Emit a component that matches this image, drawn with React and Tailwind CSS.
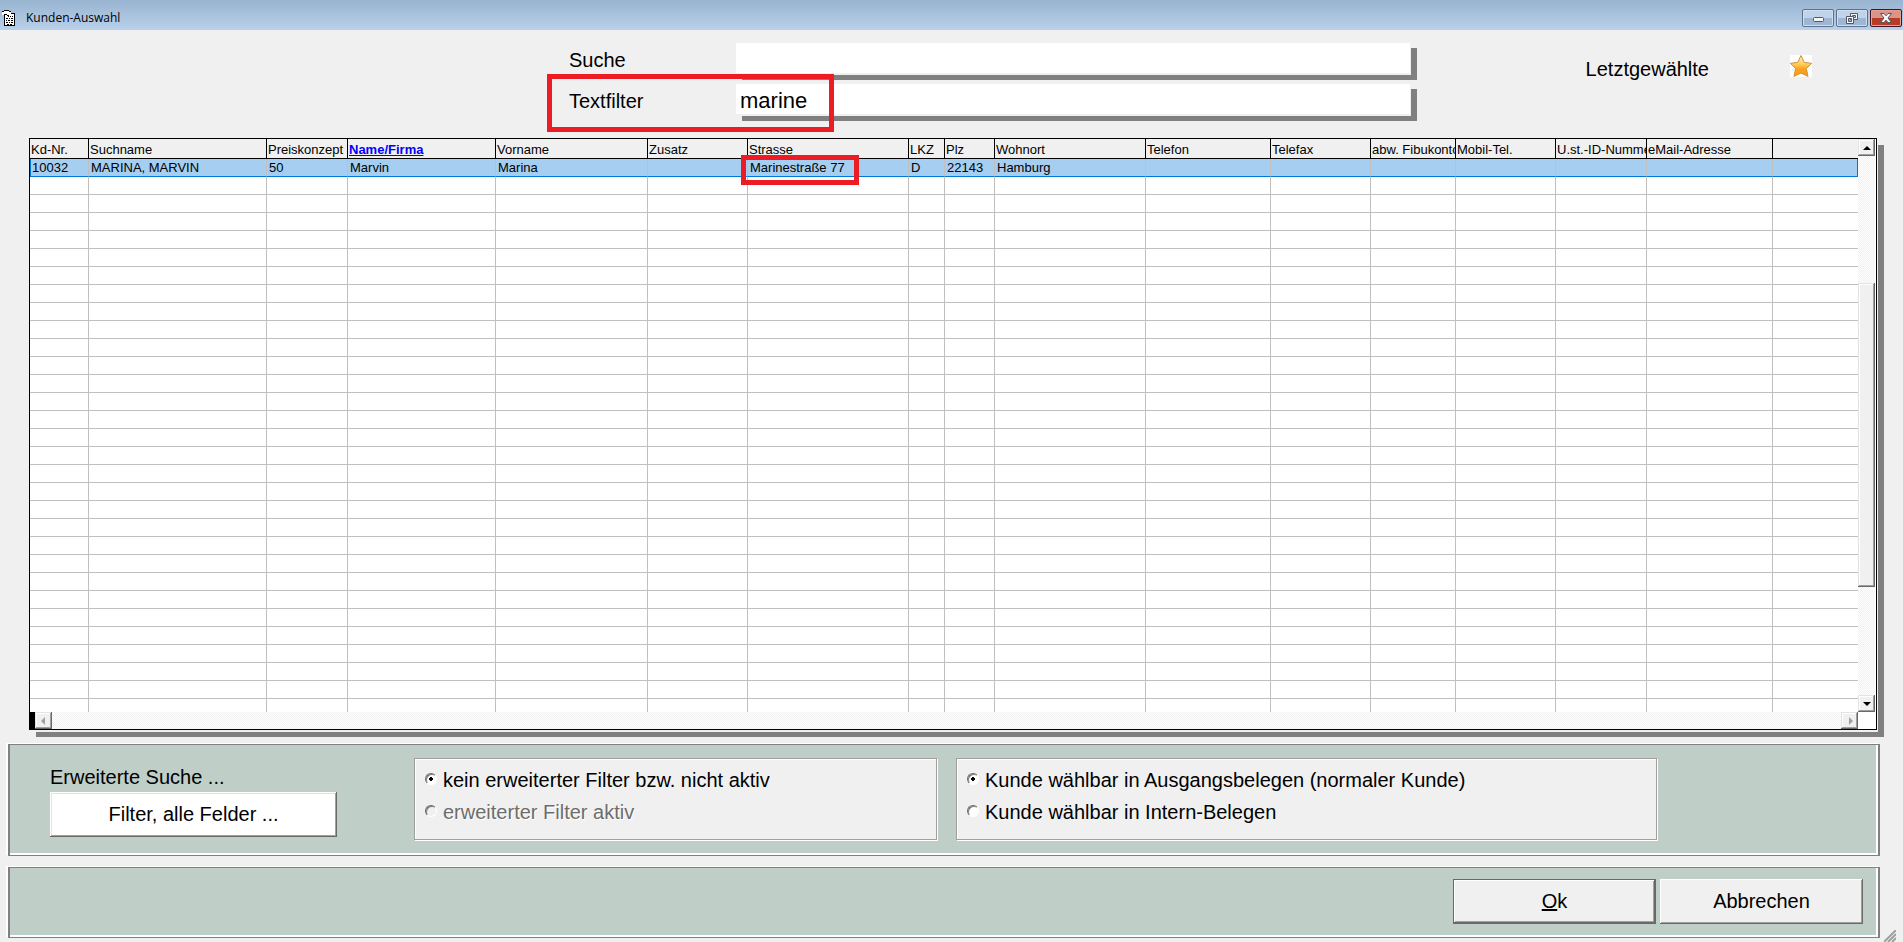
import { useState } from "react"

const COLUMNS = [
  { key: "nr", title: "Kd-Nr.", width: "w-[59px]" },
  { key: "suchname", title: "Suchname", width: "w-[178px]" },
  { key: "preis", title: "Preiskonzept", width: "w-[81px]" },
  { key: "name", title: "Name/Firma", width: "w-[148px]", sorted: true },
  { key: "vorname", title: "Vorname", width: "w-[152px]" },
  { key: "zusatz", title: "Zusatz", width: "w-[100px]" },
  { key: "strasse", title: "Strasse", width: "w-[161px]", marked: true },
  { key: "lkz", title: "LKZ", width: "w-[36px]" },
  { key: "plz", title: "Plz", width: "w-[50px]" },
  { key: "ort", title: "Wohnort", width: "w-[151px]" },
  { key: "telefon", title: "Telefon", width: "w-[125px]" },
  { key: "telefax", title: "Telefax", width: "w-[100px]" },
  { key: "fibu", title: "abw. Fibukonto", width: "w-[85px]" },
  { key: "mobil", title: "Mobil-Tel.", width: "w-[100px]" },
  { key: "ust", title: "U.st.-ID-Nummer", width: "w-[91px]" },
  { key: "email", title: "eMail-Adresse", width: "w-[126px]" },
  { key: "rest", title: "", width: "" },
]

const CUSTOMER = {
  nr: "10032",
  suchname: "MARINA, MARVIN",
  preis: "50",
  name: "Marvin",
  vorname: "Marina",
  strasse: "Marinestraße 77",
  lkz: "D",
  plz: "22143",
  ort: "Hamburg",
}

const EMPTY_ROWS = Array.from({ length: 29 }, (_, i) => i)

const TRACK =
  "bg-[repeating-conic-gradient(#ffffff_0_25%,#f0f0f0_0_50%)] bg-[length:2px_2px]"

const RAISED =
  "bg-[#f0f0f0] shadow-[inset_-1px_-1px_0_#696969,inset_1px_1px_0_#e3e3e3,inset_-2px_-2px_0_#a0a0a0,inset_2px_2px_0_#ffffff]"

const PANEL =
  "border-x-2 border-y border-[#808080] bg-[#bfcfc8] shadow-[inset_-2px_-2px_0_#ffffff,-2px_-1px_0_#ffffff]"

const TitleBar = () => (
  <header className="flex h-[30px] items-center bg-linear-to-b from-[#99b4d1] to-[#b9d1ea] pl-[2px] pt-[6px]">
    <svg width="14" height="17" viewBox="0 0 14 17" shapeRendering="crispEdges">
      <path d="M2.500 3.500h10v12h-10z" fill="#fff" stroke="#000" />
      <path
        d="M6 6.500h1m1 0h1m1 0h1M4 8.500h2m1 0h1m1 0h2M4 10.500h1m1 0h2m1 0h2M4 12.500h2m1 0h1m1 0h2M5 14h2m1 0h2"
        stroke="#000"
      />
      <path d="M0 2h2V1h5v1h2v2H7v2H5V5H0z" fill="#fff" />
      <path d="M0 1.500h2M2 .500h5M7 1.500h2M2 4.500h3M5 5.500h2" stroke="#000" />
    </svg>
    <h1 className="ml-[10px] flex-1 font-['Open_Sans',sans-serif] text-[12px]">
      Kunden-Auswahl
    </h1>
    <div className="flex gap-[2px] pr-px">
      <button
        aria-label="Minimieren"
        className="flex h-[18px] w-8 items-center justify-center rounded-[2px] border border-[#5d718c] bg-linear-to-b from-[#c0d3e9] from-50% to-[#9db6d3] to-50% shadow-[inset_0_0_0_1px_#cfdff0]"
      >
        <svg width="11" height="5" viewBox="0 0 11 5" className="mt-[3px]">
          <rect x=".5" y=".5" width="10" height="4" rx="1" fill="#f5f5f5" stroke="#535666" />
        </svg>
      </button>
      <button
        aria-label="Wiederherstellen"
        className="flex h-[18px] w-8 items-center justify-center rounded-[2px] border border-[#5d718c] bg-linear-to-b from-[#c0d3e9] from-50% to-[#9db6d3] to-50% shadow-[inset_0_0_0_1px_#cfdff0]"
      >
        <svg width="12" height="11" viewBox="0 0 12 11">
          <path
            d="M4.500.500h7v6h-7zM6.500 2.500h3v2h-3z"
            fill="#f5f5f5"
            fillRule="evenodd"
            stroke="#535666"
          />
          <path
            d="M.500 3.500h7v7h-7zM2.500 5.500h3v3h-3z"
            fill="#f5f5f5"
            fillRule="evenodd"
            stroke="#535666"
          />
        </svg>
      </button>
      <button
        aria-label="Schließen"
        className="flex h-[18px] w-8 items-center justify-center rounded-[2px] border border-[#43141d] bg-linear-to-b from-[#dd9488] from-50% to-[#b83c25] to-50% shadow-[inset_0_0_0_1px_#e9a092]"
      >
        <svg width="12" height="10" viewBox="0 0 12 10">
          <path
            d="M.500.500h3.500L6 2.800 8 .500h3.500L8 5l3.500 4.500H8L6 7.200 4 9.500H.500L4 5z"
            fill="#f8f8f8"
            stroke="#535666"
          />
        </svg>
      </button>
    </div>
  </header>
)

const SearchField = ({ id, label, value, onChange }) => (
  <div className="flex items-start">
    <label htmlFor={id} className="w-[167px] pt-[3px] text-[20px] leading-[28px]">
      {label}
    </label>
    <input
      id={id}
      type="text"
      value={value}
      onChange={(e) => onChange(e.target.value)}
      className="h-8 min-w-0 flex-1 border-r border-b-2 border-[#f0f0f0] bg-white pl-1 pt-[2px] text-[22px] shadow-[6px_5px_0_#808080] outline-none"
    />
  </div>
)

const Star = () => (
  <svg width="22" height="22" viewBox="0 0 22 22">
    <defs>
      <linearGradient id="gold" x1="0" y1="0" x2="0" y2="1">
        <stop offset="0" stopColor="#fff3b0" />
        <stop offset=".4" stopColor="#fdd060" />
        <stop offset=".65" stopColor="#fca21c" />
        <stop offset="1" stopColor="#fb9a1e" />
      </linearGradient>
    </defs>
    <path
      d="M11 .500l3.300 6.900 7.300.900-5.200 5.300 1.600 7.800-7-3.300-7 3.300 1.600-7.800L.400 8.300l7.300-.900z"
      fill="url(#gold)"
      stroke="#d0913c"
      strokeLinejoin="round"
    />
  </svg>
)

const ScrollButton = ({ label, points, disabled }) => (
  <button
    aria-label={label}
    disabled={disabled}
    className={`flex h-[17px] w-[17px] shrink-0 items-center justify-center ${RAISED}`}
  >
    <svg width="8" height="8" viewBox="0 0 8 8">
      <polygon points={points} fill={disabled ? "#a0a0a0" : "#000"} />
    </svg>
  </button>
)

const CustomerTable = () => (
  <div className="ml-[29px] mr-[26px] border border-black bg-white shadow-[1px_2px_0_#f0f0f0,7px_7px_0_#808080]">
    <div className="flex">
      <div className="h-[573px] min-w-0 flex-1">
        <table className="w-full table-fixed border-separate border-spacing-0 text-[13px] leading-[17px]">
          <thead>
            <tr className="h-5">
              {COLUMNS.map((col) => (
                <th
                  key={col.key}
                  className={`${col.width} h-5 border-b border-black bg-[#f0f0f0] p-0 pl-px pt-[2px] text-left font-normal not-last:border-r`}
                >
                  <div className="h-[17px] overflow-hidden whitespace-nowrap">
                    {col.sorted ? (
                      <a href="#sort" className="font-bold text-[#0000ff] underline">
                        {col.title}
                      </a>
                    ) : (
                      col.title
                    )}
                  </div>
                </th>
              ))}
            </tr>
          </thead>
          <tbody>
            <tr className="h-[18px]">
              {COLUMNS.map((col) => (
                <td
                  key={col.key}
                  className="relative h-[18px] whitespace-nowrap border-b border-r border-r-[#c0c0c0] border-b-[#0078d7] bg-[#a5cef0] p-0 pl-[2px] first:border-l first:border-l-[#0078d7] first:pl-px last:border-r-[#0078d7]"
                >
                  {CUSTOMER[col.key]}
                  {col.marked && (
                    <span className="absolute -left-[7px] -top-1 h-[30px] w-[118px] border-[5px] border-[#ed1c24]" />
                  )}
                </td>
              ))}
            </tr>
            {EMPTY_ROWS.map((row) => (
              <tr key={row} className="h-[18px]">
                {COLUMNS.map((col) => (
                  <td
                    key={col.key}
                    className="h-[18px] border-b border-[#c0c0c0] p-0 not-last:border-r"
                  />
                ))}
              </tr>
            ))}
            <tr className="h-[13px]">
              {COLUMNS.map((col) => (
                <td key={col.key} className="h-[13px] border-[#c0c0c0] p-0 not-last:border-r" />
              ))}
            </tr>
          </tbody>
        </table>
      </div>
      <div className={`mr-px flex w-[17px] flex-col ${TRACK}`}>
        <ScrollButton label="Nach oben" points="0,6 4,2 8,6" />
        <div className="h-[127px]" />
        <div className={`h-[304px] ${RAISED}`} />
        <div className="flex-1" />
        <ScrollButton label="Nach unten" points="0,2 8,2 4,6" />
      </div>
    </div>
    <div className="flex h-[17px] pr-[18px]">
      <div className="w-[5px] bg-black" />
      <ScrollButton label="Nach links" points="5,0 5,8 1,4" disabled />
      <div className={`flex-1 ${TRACK}`} />
      <ScrollButton label="Nach rechts" points="3,0 7,4 3,8" disabled />
    </div>
  </div>
)

const Radio = ({ name, label, checked, onChange, disabled }) => (
  <label
    className={`flex h-8 items-center gap-[6px] text-[20px] ${
      disabled ? "text-[#6d6d6d] [text-shadow:1px_1px_0_#ffffff]" : ""
    }`}
  >
    <input
      type="radio"
      name={name}
      checked={checked}
      disabled={disabled}
      onChange={onChange}
      className="mb-[2px] h-3 w-3 appearance-none rounded-full border border-t-[#696969] border-l-[#696969] border-r-white border-b-white bg-white shadow-[inset_1px_1px_0_#808080] checked:bg-[radial-gradient(circle,#000_2px,#fff_2px)] disabled:bg-[#f0f0f0]"
    />
    {label}
  </label>
)

const GROUP =
  "h-[82px] border border-[#a0a0a0] bg-[#f0f0f0] pl-[10px] pt-[5px] shadow-[inset_1px_1px_0_#ffffff,1px_1px_0_#ffffff]"

const FilterPanel = () => {
  const [extended, setExtended] = useState(false)
  const [intern, setIntern] = useState(false)

  return (
    <section className={`flex h-28 pl-10 pt-[13px] ${PANEL}`}>
      <div className="w-[287px]">
        <h2 className="pt-1 text-[20px] leading-[30px]">Erweiterte Suche ...</h2>
        <button className="h-[45px] w-full bg-white pb-[2px] text-[20px] shadow-[inset_-1px_-1px_0_#696969,inset_1px_1px_0_#ffffff,inset_-2px_-2px_0_#a0a0a0,inset_2px_2px_0_#e3e3e3]">
          Filter, alle Felder ...
        </button>
      </div>
      <div className={`ml-[77px] w-[523px] ${GROUP}`}>
        <Radio
          name="filter"
          label="kein erweiterter Filter bzw. nicht aktiv"
          checked={!extended}
          onChange={() => setExtended(false)}
        />
        <Radio
          name="filter"
          label="erweiterter Filter aktiv"
          checked={extended}
          onChange={() => setExtended(true)}
          disabled
        />
      </div>
      <div className={`ml-[19px] w-[701px] ${GROUP}`}>
        <Radio
          name="belege"
          label="Kunde wählbar in Ausgangsbelegen (normaler Kunde)"
          checked={!intern}
          onChange={() => setIntern(false)}
        />
        <Radio
          name="belege"
          label="Kunde wählbar in Intern-Belegen"
          checked={intern}
          onChange={() => setIntern(true)}
        />
      </div>
    </section>
  )
}

const App = () => {
  const [search, setSearch] = useState("")
  const [filter, setFilter] = useState("marine")

  return (
    <div className="min-h-screen bg-[#f0f0f0] font-['Liberation_Sans',Arial,sans-serif] text-black">
      <TitleBar />
      <div className="flex h-[108px] items-start pt-[13px]">
        <div className="relative ml-[569px] flex flex-1 flex-col gap-[9px]">
          <SearchField id="suche" label="Suche" value={search} onChange={setSearch} />
          <SearchField id="textfilter" label="Textfilter" value={filter} onChange={setFilter} />
          {/* highlight around the text filter */}
          <span className="pointer-events-none absolute -left-[22px] top-[31px] h-[58px] w-[287px] border-[5px] border-[#ed1c24]" />
        </div>
        <span className="ml-[175px] pt-[11px] text-[20px] leading-[30px]">Letztgewählte</span>
        <button aria-label="Letztgewählte Kunden" className="ml-[81px] mr-[91px] mt-3 bg-white">
          <Star />
        </button>
      </div>
      <CustomerTable />
      <main className="ml-2 mr-[23px] mt-[14px] flex flex-col gap-[11px]">
        <FilterPanel />
        <section className={`flex h-[71px] justify-end gap-1 pr-[15px] pt-[11px] ${PANEL}`}>
          <button className="h-[45px] w-[203px] border border-[#696969] bg-[#f0f0f0] pb-[2px] text-[20px] shadow-[inset_-1px_-1px_0_#696969,inset_1px_1px_0_#ffffff,inset_-2px_-2px_0_#a0a0a0]">
            <span className="underline">O</span>k
          </button>
          <button className="h-[45px] w-[203px] bg-[#f0f0f0] pb-[2px] text-[20px] shadow-[inset_-1px_-1px_0_#696969,inset_1px_1px_0_#ffffff,inset_-2px_-2px_0_#a0a0a0]">
            Abbrechen
          </button>
        </section>
      </main>
      <svg className="absolute right-[7px] bottom-0" width="12" height="12" viewBox="0 0 12 12">
        <path d="M0 12L12 0M4 12l8-8M8 12l4-4" stroke="#a0a0a0" strokeWidth="2" />
      </svg>
    </div>
  )
}

export default App
